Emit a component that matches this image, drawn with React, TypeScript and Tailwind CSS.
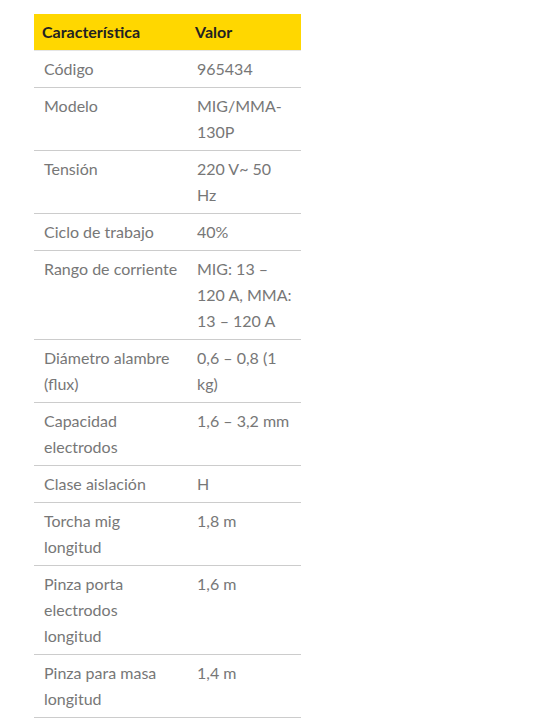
import React from 'react';

// each cell lists its lines as they wrap in the column
const rows: [string[], string[]][] = [
  [['Código'], ['965434']],
  [['Modelo'], ['MIG/MMA-', '130P']],
  [['Tensión'], ['220 V~ 50', 'Hz']],
  [['Ciclo de trabajo'], ['40%']],
  [['Rango de corriente'], ['MIG: 13 –', '120 A, MMA:', '13 – 120 A']],
  [['Diámetro alambre', '(flux)'], ['0,6 – 0,8 (1', 'kg)']],
  [['Capacidad', 'electrodos'], ['1,6 – 3,2 mm']],
  [['Clase aislación'], ['H']],
  [['Torcha mig', 'longitud'], ['1,8 m']],
  [['Pinza porta', 'electrodos', 'longitud'], ['1,6 m']],
  [['Pinza para masa', 'longitud'], ['1,4 m']],
];

function Lines({ lines }: { lines: string[] }) {
  return (
    <>
      {lines.map((l, i) => (
        <span key={i} className="block whitespace-nowrap">
          {l}
        </span>
      ))}
    </>
  );
}

export default function App() {
  return (
    <div className="min-h-[728px] bg-white pt-[14px] pl-[34px] font-['Lato','Liberation_Sans',sans-serif] text-[16px] leading-[26px]">
      <table className="w-[267px] table-fixed border-collapse">
        <colgroup>
          <col className="w-[153px]" />
          <col className="w-[114px]" />
        </colgroup>
        <thead>
          <tr className="bg-[#ffd700] text-[#222] font-bold border-b border-[#e5e5e5]">
            <th className="text-left align-top py-[5px] pl-[8px] pr-2">Característica</th>
            <th className="text-left align-top py-[5px] pl-[8px] pr-2">Valor</th>
          </tr>
        </thead>
        <tbody>
          {rows.map(([k, v]) => (
            <tr key={k.join(' ')} className="border-b border-[#ccc] text-[#777]">
              <td className="align-top py-[5px] pl-[10px] pr-[10px]">
                <Lines lines={k} />
              </td>
              <td className="align-top py-[5px] pl-[10px] pr-[10px]">
                <Lines lines={v} />
              </td>
            </tr>
          ))}
        </tbody>
      </table>
    </div>
  );
}
